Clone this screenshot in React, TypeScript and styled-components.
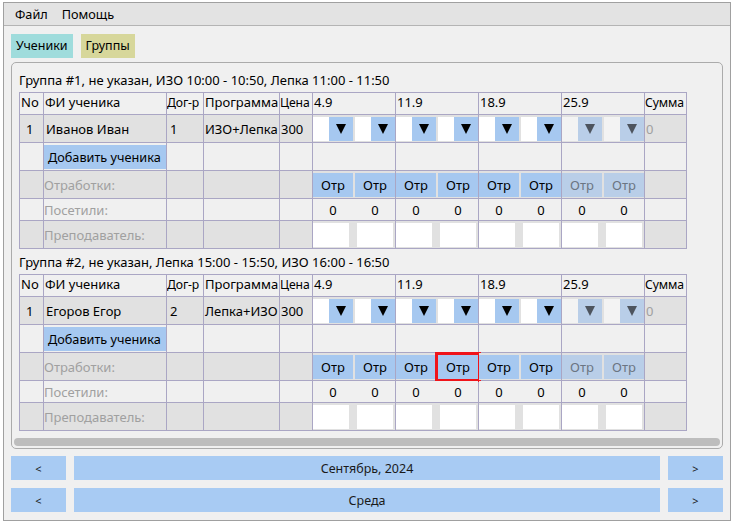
import React from 'react';
import styled, { createGlobalStyle } from 'styled-components';

const Global = createGlobalStyle`
  html, body { margin: 0; padding: 0; background: #ffffff; }
  body {
    font-family: "Noto Sans", "Open Sans", sans-serif;
    font-size: 13px;
    color: #000;
  }
  * { box-sizing: border-box; }
`;

const BLUE = '#a6c8f0';
const BLUE_DIS = '#b9cee8';
const LINE = '#aaa6c4';
const ROW_DARK = '#e1e1e1';
const ROW_LIGHT = '#f0f0f0';

const Window = styled.div`
  margin: 2px 0 0 3px;
  width: 728px;
  height: 519px;
  border: 1px solid #a0a0a0;
  background: #f0f0f0;
  display: flex;
  flex-direction: column;
`;

const MenuBar = styled.div`
  height: 23px;
  background: #e3e3e3;
  border-bottom: 1px solid #b4b4b4;
  display: flex;
  align-items: center;
  padding-left: 11px;
  gap: 14px;
  font-size: 12.7px;
`;

const MenuItem = styled.span`
  line-height: 22px;
`;

const Body = styled.div`
  padding: 8px 7px 8px 7px;
  display: flex;
  flex-direction: column;
`;

const Tabs = styled.div`
  display: flex;
  gap: 8px;
  height: 24px;
`;

const Tab = styled.div<{ $bg: string }>`
  background: ${(p) => p.$bg};
  padding: 0 5px;
  line-height: 24px;
  font-size: 12.5px;
`;

const GroupBox = styled.div`
  margin-top: 4px;
  height: 387px;
  border: 1px solid #ababab;
  border-radius: 5px;
  padding: 8px 7px 2px;
  display: flex;
  flex-direction: column;
`;

const GroupTitle = styled.div<{ $first?: boolean }>`
  height: 18px;
  line-height: 18px;
  margin-top: ${(p) => (p.$first ? 0 : 4)}px;
  white-space: nowrap;
`;

const Grid = styled.div`
  margin-top: 3px;
  display: grid;
  grid-template-columns: 23px 122px 36px 75px 32px repeat(4, 82px) 41px;
  grid-template-rows: 21px 27px 27px 27px 21px 27px;
  gap: 1px;
  padding: 1px;
  background: ${LINE};
  width: 668px;
`;

const Cell = styled.div<{ $dark?: boolean; $pad?: number; $muted?: boolean }>`
  background: ${(p) => (p.$dark ? ROW_DARK : ROW_LIGHT)};
  padding-left: ${(p) => (p.$pad ?? 2)}px;
  display: flex;
  align-items: center;
  white-space: nowrap;
  overflow: visible;
  color: ${(p) => (p.$muted ? '#a0a0a0' : '#000')};
`;

const HeadCell = styled(Cell)<{ $tight?: boolean }>`
  align-items: flex-start;
  line-height: 19px;
  padding-left: ${(p) => (p.$tight ? 0 : 1)}px;
  overflow: hidden;
  font-size: ${(p) => (p.$tight ? 12.2 : 13)}px;
  letter-spacing: ${(p) => (p.$tight ? -0.1 : 0)}px;
`;

const Pair = styled.div<{ $gap: number }>`
  display: flex;
  gap: ${(p) => p.$gap}px;
  align-items: center;
`;

const Combo = styled.div`
  width: 40px;
  height: 24px;
  display: flex;
`;

const ComboField = styled.div<{ $disabled?: boolean }>`
  width: 16px;
  background: ${(p) => (p.$disabled ? '#f3f3f3' : '#ffffff')};
`;

const ComboArrowBox = styled.div<{ $disabled?: boolean }>`
  width: 24px;
  background: ${(p) => (p.$disabled ? BLUE_DIS : BLUE)};
  display: flex;
  align-items: center;
  justify-content: center;
`;

const Arrow = styled.span<{ $disabled?: boolean }>`
  width: 0;
  height: 0;
  border-left: 5px solid transparent;
  border-right: 5px solid transparent;
  border-top: 10px solid ${(p) => (p.$disabled ? '#4d545e' : '#000')};
  margin-top: 1px;
`;

const OtrButton = styled.div<{ $disabled?: boolean; $marked?: boolean }>`
  width: 40px;
  height: 24px;
  background: ${(p) => (p.$disabled ? BLUE_DIS : BLUE)};
  color: ${(p) => (p.$disabled ? '#6b7582' : '#000')};
  display: flex;
  align-items: center;
  justify-content: center;
  outline: ${(p) => (p.$marked ? '3px solid #f0141a' : 'none')};
`;

const Zero = styled.span`
  width: 40px;
  text-align: center;
`;

const TeacherInput = styled.div`
  width: 36px;
  height: 24px;
  background: #ffffff;
`;

const AddButton = styled.div`
  width: 122px;
  height: 24px;
  background: ${BLUE};
  display: flex;
  align-items: center;
  padding-left: 4px;
  font-size: 12.7px;
`;

const ScrollBar = styled.div`
  margin: 7px -5px 0;
  height: 8px;
  border-radius: 4px;
  background: #bdbdbd;
`;

const NavRow = styled.div<{ $top: number }>`
  margin-top: ${(p) => p.$top}px;
  display: flex;
  gap: 8px;
  height: 24px;
`;

const NavButton = styled.div<{ $wide?: boolean }>`
  ${(p) => (p.$wide ? 'flex: 1;' : 'width: 55px;')}
  background: #a8cbf3;
  display: flex;
  align-items: center;
  justify-content: center;
  color: #1a1a1a;
  font-size: ${(p) => (p.$wide ? 12.5 : 11)}px;
`;

const dates = ['4.9', '11.9', '18.9', '25.9'];

type Group = {
  title: string;
  student: string;
  contract: string;
  program: string;
  marked?: number;
};

const groups: Group[] = [
  {
    title: 'Группа #1, не указан, ИЗО 10:00 - 10:50, Лепка 11:00 - 11:50',
    student: 'Иванов Иван',
    contract: '1',
    program: 'ИЗО+Лепка',
  },
  {
    title: 'Группа #2, не указан, Лепка 15:00 - 15:50, ИЗО 16:00 - 16:50',
    student: 'Егоров Егор',
    contract: '2',
    program: 'Лепка+ИЗО',
    marked: 3,
  },
];

function GroupTable({ g }: { g: Group }) {
  return (
    <Grid>
      <HeadCell>No</HeadCell>
      <HeadCell>ФИ ученика</HeadCell>
      <HeadCell $tight>Дог-р</HeadCell>
      <HeadCell>Программа</HeadCell>
      <HeadCell $tight>Цена</HeadCell>
      {dates.map((d) => (
        <HeadCell key={d}>{d}</HeadCell>
      ))}
      <HeadCell $tight>Сумма</HeadCell>

      <Cell $dark $pad={6}>1</Cell>
      <Cell $dark>{g.student}</Cell>
      <Cell $dark $pad={3}>{g.contract}</Cell>
      <Cell $dark $pad={1}>{g.program}</Cell>
      <Cell $dark $pad={1}>300</Cell>
      {dates.map((d, i) => (
        <Cell key={d} $dark $pad={0}>
          <Pair $gap={2}>
            {[0, 1].map((k) => (
              <Combo key={k}>
                <ComboField $disabled={i === 3} />
                <ComboArrowBox $disabled={i === 3}>
                  <Arrow $disabled={i === 3} />
                </ComboArrowBox>
              </Combo>
            ))}
          </Pair>
        </Cell>
      ))}
      <Cell $dark $muted $pad={1}>0</Cell>

      <Cell />
      <Cell $pad={0}>
        <AddButton>Добавить ученика</AddButton>
      </Cell>
      <Cell />
      <Cell />
      <Cell />
      {dates.map((d) => (
        <Cell key={d} />
      ))}
      <Cell />

      <Cell $dark />
      <Cell $dark $muted $pad={0}>Отработки:</Cell>
      <Cell $dark />
      <Cell $dark />
      <Cell $dark />
      {dates.map((d, i) => (
        <Cell key={d} $dark $pad={0}>
          <Pair $gap={2}>
            {[0, 1].map((k) => (
              <OtrButton key={k} $disabled={i === 3} $marked={g.marked === i * 2 + k}>
                Отр
              </OtrButton>
            ))}
          </Pair>
        </Cell>
      ))}
      <Cell $dark />

      <Cell />
      <Cell $muted $pad={0}>Посетили:</Cell>
      <Cell />
      <Cell />
      <Cell />
      {dates.map((d) => (
        <Cell key={d} $pad={0}>
          <Pair $gap={2}>
            <Zero>0</Zero>
            <Zero>0</Zero>
          </Pair>
        </Cell>
      ))}
      <Cell />

      <Cell $dark />
      <Cell $dark $muted $pad={0}>Преподаватель:</Cell>
      <Cell $dark />
      <Cell $dark />
      <Cell $dark />
      {dates.map((d) => (
        <Cell key={d} $dark $pad={0}>
          <Pair $gap={8}>
            <TeacherInput />
            <TeacherInput />
          </Pair>
        </Cell>
      ))}
      <Cell $dark />
    </Grid>
  );
}

export default function App() {
  return (
    <>
      <Global />
      <Window>
        <MenuBar>
          <MenuItem>Файл</MenuItem>
          <MenuItem>Помощь</MenuItem>
        </MenuBar>
        <Body>
          <Tabs>
            <Tab $bg="#9fdcdc">Ученики</Tab>
            <Tab $bg="#d7d79b">Группы</Tab>
          </Tabs>
          <GroupBox>
            {groups.map((g, i) => (
              <React.Fragment key={g.title}>
                <GroupTitle $first={i === 0}>{g.title}</GroupTitle>
                <GroupTable g={g} />
              </React.Fragment>
            ))}
            <ScrollBar />
          </GroupBox>
          <NavRow $top={7}>
            <NavButton>&lt;</NavButton>
            <NavButton $wide>Сентябрь, 2024</NavButton>
            <NavButton>&gt;</NavButton>
          </NavRow>
          <NavRow $top={8}>
            <NavButton>&lt;</NavButton>
            <NavButton $wide>Среда</NavButton>
            <NavButton>&gt;</NavButton>
          </NavRow>
        </Body>
      </Window>
    </>
  );
}
